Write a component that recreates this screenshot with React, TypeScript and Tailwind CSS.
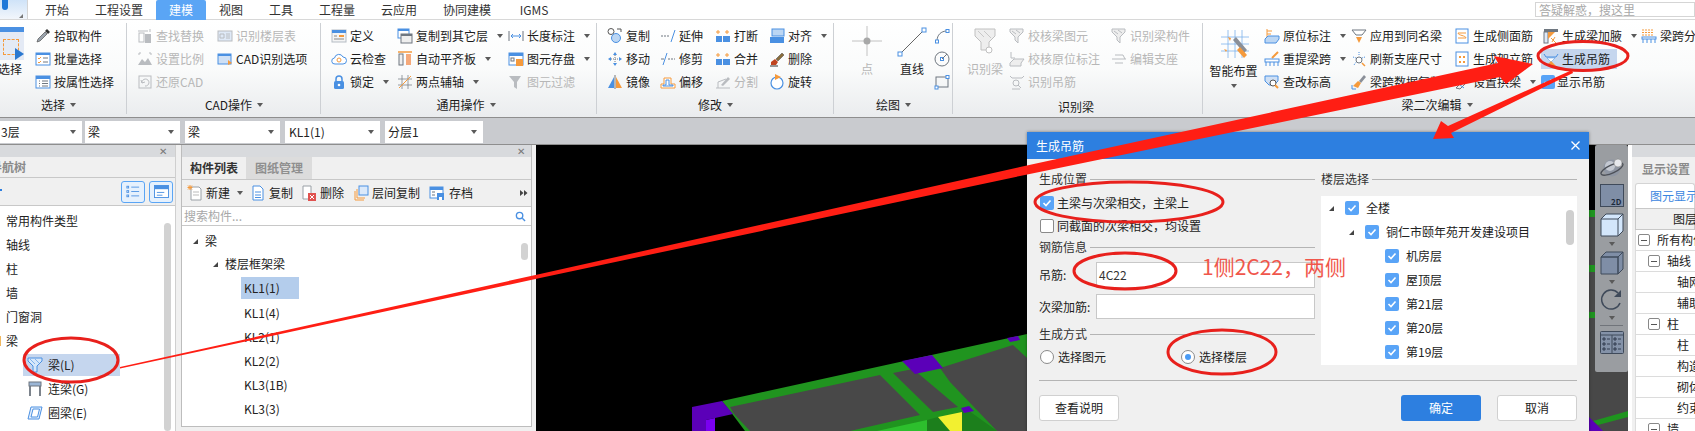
import type { ReactNode } from "react";

const B = "#4a90e2", O = "#f59a3c", G = "#b9bcc0", D = "#6f7780", L = "#dfe9f7";

const icons: Record<string, ReactNode> = {
  pick: <><path d="M2 14l1-3 7-7 2 2-7 7z" fill="#9aa3ad" stroke="#555" strokeWidth=".7" /><path d="M10 3l2-2 3 3-2 2z" fill="#333" /></>,
  batch: <><rect x="1" y="2" width="14" height="12" fill="#fff" stroke={B} /><rect x="1" y="2" width="14" height="2" fill={B} /><path d="M3 7l1 1 2-2M3 11l1 1 2-2" stroke={O} fill="none" /><path d="M8 7h5M8 11h5" stroke={D} /></>,
  attr: <><rect x="1" y="2" width="14" height="12" fill="#fff" stroke={B} /><rect x="1" y="2" width="14" height="3" fill={B} /><path d="M4 7h1M7 7h6M4 9.500h1M7 9.500h6M4 12h1M7 12h6" stroke={D} /></>,
  find: <><path d="M1 3h10M13 1v3" stroke={G} /><rect x="2" y="5" width="5" height="9" fill="none" stroke={G} /><rect x="8" y="6" width="6" height="9" fill={G} /></>,
  scale: <><path d="M2 2h2M12 2h2M2 4v-2M14 4v-2" stroke={G} /><path d="M1 14l4-6 3 3 3-4 4 7z" fill={G} /></>,
  restore: <><rect x="2" y="2" width="12" height="12" fill="none" stroke={G} /><path d="M5 9a3.500 3.500 0 1 1 3 3M5 9l-1-3M5 9l3-1" stroke={G} fill="none" /></>,
  floor: <><rect x="1" y="3" width="14" height="10" fill={L} stroke={G} /><path d="M3 6h4v4H3zM9 6h4M9 8h4M9 10h4" stroke={G} fill="none" /></>,
  cadopt: <><rect x="1" y="3" width="13" height="10" fill="#cfe0f5" stroke={B} /><rect x="1" y="3" width="13" height="2" fill={B} /><path d="M11 9l4 3-4 2z" fill={O} /></>,
  define: <><rect x="1" y="2" width="14" height="12" fill="#f4f4f4" stroke="#b5bcc4" /><rect x="1" y="2" width="14" height="3" fill={B} /><rect x="8" y="7" width="5" height="2" fill={O} /><path d="M3 8h3M3 11h10" stroke="#888" /></>,
  cloud: <><path d="M4 13a3 3 0 0 1-.500-6 4.500 4.500 0 0 1 8.500-1 3.500 3.500 0 0 1 0 7z" fill="#fff" stroke={B} /><circle cx="8" cy="9" r="2" fill="none" stroke={O} /></>,
  lock: <><path d="M5 7V5a3 3 0 0 1 6 0v2" fill="none" stroke={B} strokeWidth="1.500" /><rect x="3" y="7" width="10" height="8" rx="1.500" fill={B} /><circle cx="8" cy="11" r="1.300" fill="#fff" /></>,
  copyl: <><rect x="1" y="1" width="11" height="9" fill="#fff" stroke={B} /><rect x="1" y="1" width="11" height="2" fill={B} /><rect x="4" y="6" width="11" height="9" fill="#eee" stroke={D} /><rect x="4" y="6" width="11" height="2" fill={D} /></>,
  plate: <><path d="M1 1h14" stroke={O} strokeWidth="1.500" /><rect x="2" y="3" width="4" height="11" fill="#eee" stroke={D} /><rect x="9" y="3" width="5" height="11" fill="#f5a97a" /></>,
  twopt: <><path d="M1 5h14M1 11h14M5 1v14M11 1v14" stroke={D} strokeWidth=".7" /><path d="M2 14L14 2" stroke={O} /></>,
  len: <><path d="M1 3v10M15 3v10" stroke={D} /><path d="M3 8h10M3 8l2-2M3 8l2 2M13 8l-2-2M13 8l-2 2" stroke={B} fill="none" /></>,
  store: <><rect x="1" y="2" width="14" height="12" fill="#fff" stroke={B} /><rect x="1" y="2" width="14" height="3" fill={B} /><rect x="8" y="8" width="7" height="7" fill={O} /><rect x="3" y="7" width="3" height="3" fill="none" stroke={D} /></>,
  filter: <path d="M1 2h12L9 8v7L6 13V8z" fill={G} />,
  copy: <><circle cx="4" cy="3.500" r="3" fill="none" stroke="#555" /><circle cx="9" cy="10" r="4.500" fill="#bcd6f3" stroke={B} /><path d="M10 1h4v3" stroke="#555" fill="none" /></>,
  move: <><path d="M8 1l2 3H6zM8 15l2-3H6zM1 8l3-2v4zM15 8l-3-2v4z" fill={B} /><path d="M8 4v8M4 8h8" stroke={D} strokeDasharray="1 1" /></>,
  mirror: <><path d="M7 3v11H1z" fill={B} /><path d="M9 3v11h6z" fill={O} /><path d="M8 1v14" stroke="#777" /></>,
  extend: <><path d="M1 8h8" stroke={D} strokeDasharray="2 1" /><path d="M11 14l4-12" stroke={B} /></>,
  trim: <><path d="M8 8h7" stroke={D} strokeDasharray="2 1" /><path d="M1 8h3" stroke={D} /><path d="M3 14l4-12" stroke={B} /></>,
  offset: <><path d="M1 14v-4h3V4h7v6h4v4z" fill="#fff" stroke={O} /><path d="M3 12v-1h3V6h3v5h4v1z" fill="none" stroke={B} /></>,
  brk: <><path d="M3 2v4M1 4h4M12 2v4M10 4h4" stroke={O} /><rect x="1" y="8" width="6" height="6" fill={B} /><rect x="8" y="8" width="7" height="6" fill={B} /></>,
  split: <><path d="M1 14h14M3 14V8l8-3" stroke={G} fill="none" /><path d="M6 11l7-8 2 2-7 7z" fill={G} /></>,
  alignb: <><rect x="3" y="1" width="12" height="7" fill="#bcd6f3" stroke={B} /><rect x="1" y="9" width="14" height="6" fill={B} /></>,
  del: <><path d="M7 8l6-6 2 2-6 6z" fill="#8a6d3b" stroke="#444" strokeWidth=".5" /><path d="M2 11l4-3 3 3-2 3H2z" fill="#c0441f" /><path d="M1 15h8" stroke="#333" /></>,
  rotate: <><circle cx="8" cy="9" r="6" fill="#fff" stroke={B} strokeWidth="1.200" /><path d="M6 0l6 3-6 3z" fill={O} /></>,
  arc: <><path d="M3 13C3 7 7 3 13 3" fill="none" stroke={D} /><rect x="1.500" y="12" width="3" height="3" fill="#fff" stroke={B} /><rect x="12" y="1.500" width="3" height="3" fill="#fff" stroke={B} /></>,
  circle: <><circle cx="8" cy="8" r="7" fill="none" stroke={D} /><rect x="6.500" y="6.500" width="3" height="3" fill="#fff" stroke={B} /><path d="M8 8l5-5" stroke={D} /></>,
  rectd: <><rect x="2" y="3" width="12" height="10" fill="none" stroke={D} /><rect x="12" y="1.500" width="3" height="3" fill="#fff" stroke={B} /><rect x="1" y="12" width="3" height="3" fill="#fff" stroke={B} /></>,
  chk1: <><path d="M1 1h13v3L9 9v6l-3-3V9L1 4z" fill="#eee" stroke={G} /><path d="M3 3l4 3M7 2l4 3" stroke={G} /></>,
  chk2: <><path d="M2 1v6h4" stroke={G} fill="none" /><path d="M1 12l4-4h10l-3 4v3H1z" fill="#eee" stroke={G} /></>,
  hang: <><path d="M1 2l2 2h10l2-2" fill="none" stroke={G} /><circle cx="7" cy="9" r="3" fill="none" stroke={G} /><path d="M9 11l3 3M3 15h8" stroke={G} /></>,
  sup: <><path d="M1 8h14M4 4h8l2 4M4 12h8" stroke={G} fill="none" /></>,
  origin: <><path d="M3 9V1M3 3h5M3 6h4" stroke={O} /><path d="M1 11l3-3h11v3l-3 4H1z" fill="#bcd6f3" stroke={B} /></>,
  relift: <><path d="M8 7l6-6" stroke={O} strokeWidth="2" /><rect x="1" y="8" width="14" height="3" fill="#fff" stroke={B} /><path d="M2 11v4M14 11v4M6 11v4M10 11v4" stroke={B} /></>,
  elev: <><path d="M1 2h13v5l-4 4H5L1 7z" fill="#cfe0f5" stroke={B} /><circle cx="9" cy="9" r="3" fill="#fff" stroke="#555" /><path d="M11 11l3 3" stroke={O} strokeWidth="2" /></>,
  apply: <><path d="M1 2h14l-4 5H5z" fill="#fff" stroke={D} /><path d="M5 9h6l-3 6z" fill={O} /></>,
  refresh: <><path d="M8 1v3M2 6l3 1M14 6l-3 1M3 14l2-3" stroke={B} strokeDasharray="1 1" /><circle cx="8" cy="9" r="3" fill="#fff" stroke={D} /><path d="M11 12l3 3" stroke={O} strokeWidth="1.500" /></>,
  brush: <><path d="M8 7l5-6 2 2-5 6z" fill="#8a8f98" /><path d="M2 12l5-5 3 2-3 5z" fill={O} /><path d="M1 11v4h4" stroke={B} fill="none" /></>,
  side: <><rect x="2" y="1" width="12" height="14" fill="#fff" stroke={B} /><path d="M4 5h8M4 10h8" stroke={O} /><path d="M4 5c0 2.500 8 2.500 8 5" stroke={O} fill="none" /></>,
  stand: <><rect x="2" y="1" width="12" height="14" fill="#fff" stroke={B} /><rect x="5" y="5" width="2" height="2" fill={O} /><rect x="9" y="5" width="2" height="2" fill={O} /><rect x="5" y="10" width="2" height="2" fill={O} /><rect x="9" y="10" width="2" height="2" fill={O} /></>,
  arch: <><path d="M2 14l9-9 3 2-8 8z" fill="#eee" stroke={D} /><path d="M1 7l9 7" stroke={B} /><path d="M11 5l3-3" stroke={O} strokeWidth="2" /></>,
  haunch: <><rect x="1" y="1" width="14" height="3" fill={D} /><rect x="1" y="4" width="4" height="11" fill="#dfe9f7" stroke={D} /><path d="M5 4h7L5 11z" fill={O} /><path d="M8 10l5 5M12 9l-3 5" stroke={O} /></>,
  hanging: <><path d="M1 3l2 3h10l2-3" fill="none" stroke={B} /><path d="M4 7h8L8 11z" fill="#fff" stroke={B} strokeWidth=".5" /><path d="M3 15l5-5 5 5z" fill={O} /></>,
  span: <><path d="M1 2h11M1 4.500h11M1 7h11" stroke={O} strokeDasharray="2 1" /><rect x="1" y="9" width="14" height="2" fill="#fff" stroke={B} /><path d="M2 11v4M14 11v4M6 11v4M10 11v4" stroke={B} /></>,
  beam: <><path d="M1 1h14v3l-5 5v6H6V9L1 4z" fill="#d6e7fa" stroke={B} /><path d="M3 2l5 5M8 2l4 4" stroke={B} strokeWidth=".6" /></>,
  lian: <><rect x="2" y="1" width="12" height="4" fill="#9bb6d6" stroke={D} /><path d="M3 5v10M13 5v10" stroke={D} strokeWidth="1.800" /></>,
  ring: <path d="M4 2h11l-3 12H1zM6 4h6.500l-2 8H4z" fill="#e9f2fd" stroke={B} fillRule="evenodd" />,
  newdoc: <><path d="M4 2h8l2 2v11H4z" fill="#fff" stroke="#9aa0a6" /><path d="M6 7h6M6 10h6" stroke="#bbb" /><path d="M3 0v5M0.500 2.500h5M1 .500l4 4M5 .500l-4 4" stroke={O} /></>,
  docb: <><path d="M3 1h7l3 3v11H3z" fill="#fff" stroke={B} /><path d="M5 7h6M5 10h6M5 12.500h6" stroke={B} /></>,
  docx: <><path d="M2 1h8v13H2z" fill="#fff" stroke="#9aa0a6" /><rect x="7" y="8" width="8" height="8" fill="#e0524f" /><path d="M9 10l4 4M13 10l-4 4" stroke="#fff" /></>,
  lcopy: <><path d="M2 6v9h9" fill="none" stroke={O} /><path d="M4 4v9h8" fill="none" stroke={O} /><rect x="6" y="1" width="9" height="9" fill="#dbe9fa" stroke={B} /></>,
  save: <><rect x="1" y="2" width="13" height="11" fill="#fff" stroke={B} /><rect x="1" y="2" width="13" height="3" fill={B} /><path d="M3 7h3M3 10h3" stroke={D} /><rect x="8" y="8" width="7" height="7" fill={B} /><rect x="10" y="12" width="3" height="3" fill="#fff" /></>,
};

const Ic = ({ n, className = "w-4 h-4" }: { n: string; className?: string }) => (
  <svg viewBox="0 0 16 16" strokeWidth="1" className={`${className} shrink-0`}>{icons[n]}</svg>
);

const Caret = ({ className = "" }: { className?: string }) => (
  <span className={`inline-block w-0 h-0 border-x-[3.500px] border-t-[4px] border-x-transparent border-t-[#5a5a5a] ${className}`} />
);

const Item = ({ i, t, dis, caret, cw = "ml-[6px]" }: { i: string; t: string; dis?: boolean; caret?: boolean; cw?: string }) => (
  <div className={`h-[23px] flex items-center gap-[3px] whitespace-nowrap ${dis ? "text-[#b7b7b7]" : "text-[#1c1c1c]"}`}>
    <Ic n={i} />
    <span>{t}</span>
    {caret && <Caret className={cw} />}
  </div>
);

const Group = ({ label, w, children, caret = true, labelClass = "", divider = true }: { label: string; w: string; children: ReactNode; caret?: boolean; labelClass?: string; divider?: boolean }) => (
  <div className={`${w} shrink-0 h-full flex flex-col relative`}>
    <div className="h-[75px] pt-[4px] flex overflow-hidden">{children}</div>
    <div className={`h-[20px] flex items-center gap-[5px] justify-center text-[#1c1c1c] ${labelClass}`}>
      <span>{label}</span>
      {caret && <Caret />}
    </div>
    {divider && <span className="absolute right-0 top-[3px] bottom-[3px] w-px bg-[#cdd0d4]" />}
  </div>
);

const Check = ({ on = true }: { on?: boolean }) =>
  on ? (
    <span className="w-[14px] h-[14px] rounded-[2px] bg-[#59a4f7] flex items-center justify-center shrink-0">
      <svg viewBox="0 0 14 14" className="w-[14px] h-[14px]"><path d="M3.500 7l2.500 2.500L10.500 4.500" fill="none" stroke="#fff" strokeWidth="1.600" /></svg>
    </span>
  ) : (
    <span className="w-[14px] h-[14px] rounded-[2px] bg-white border border-[#8a8a8a] shrink-0" />
  );

const Tri = ({ className = "" }: { className?: string }) => (
  <svg viewBox="0 0 7 7" className={`w-[7px] h-[7px] shrink-0 ${className}`}><path d="M6 1v5H1z" fill="#444" /></svg>
);

const Section = ({ t, className = "" }: { t: string; className?: string }) => (
  <div className={`h-[18px] flex items-center gap-[3px] text-[#333] ${className}`}>
    <span className="whitespace-nowrap">{t}</span>
    <span className="flex-1 h-px bg-[#b4b4b4]" />
  </div>
);

const Btn = ({ t, primary }: { t: string; primary?: boolean }) => (
  <div className={`w-[80px] h-[26px] rounded-[3px] flex items-center justify-center ${primary ? "bg-[#2d7fe0] text-white" : "bg-white border border-[#d0d0d0] text-[#222]"}`}>{t}</div>
);

const tabs: [string, string][] = [
  ["开始", "w-[58px]"], ["工程设置", "w-[70px] pr-[4px]"], ["建模", "w-[50px]"], ["视图", "w-[50px]"], ["工具", "w-[50px]"],
  ["工程量", "w-[62px]"], ["云应用", "w-[62px]"], ["协同建模", "w-[74px]"], ["IGMS", "w-[60px]"],
];

const combos: [string, string, string][] = [
  ["3层", "w-[82px] pl-[1px]", "mr-[3px]"], ["梁", "w-[95px] pl-[3px]", "mr-[5px]"], ["梁", "w-[95px] pl-[3px]", "mr-[5px]"],
  ["KL1(1)", "w-[95px] pl-[4px]", "mr-[5px]"], ["分层1", "w-[98px] pl-[3px]", ""],
];

const rightRows: [string, string, boolean][] = [
  ["所有构件", "pl-[2px]", true], ["轴线", "pl-[12px]", true], ["轴网", "pl-[41px]", false], ["辅助", "pl-[41px]", false],
  ["柱", "pl-[12px]", true], ["柱", "pl-[41px]", false], ["构造", "pl-[41px]", false], ["砌体", "pl-[41px]", false],
  ["约束", "pl-[41px]", false], ["墙", "pl-[12px]", true],
];

export default function App() {
  return (
    <div className="w-[1695px] h-[431px] relative overflow-hidden bg-[#c9cbcf] text-[12px] leading-none text-[#222] font-['Noto_Sans_CJK_SC','Noto_Sans',sans-serif]">
      {/* Title tabs */}
      <div className="h-[20px] bg-white flex border-b border-[#d8d8d8]">
        <div className="w-[28px] h-[19px] relative bg-gradient-to-b from-[#cfe3f8] to-[#f2f6fb] border-r border-[#d4d4d4] overflow-hidden">
          <span className="absolute left-[2px] top-[-4px] w-[6px] h-[14px] rounded-b-full bg-[#1f78d8]" />
          <svg viewBox="0 0 4 4" className="absolute right-[4px] bottom-[1px] w-[4px] h-[4px]"><path d="M4 0v4H0z" fill="#777" /></svg>
        </div>
        {tabs.map(([t, w]) => (
          <div key={t} className={`${w} h-[20px] flex items-center justify-center ${t === "建模" ? "bg-[#5aa5f5] text-white rounded-t-[2px]" : "text-[#333]"}`}>{t}</div>
        ))}
        <div className="flex-1 flex justify-end items-start pt-[2px]">
          <div className="w-[160px] h-[15px] bg-white border border-[#d5d5d5] pl-[3px] flex items-center text-[#a8a8a8]">答疑解惑，搜这里</div>
        </div>
      </div>

      {/* Ribbon */}
      <div className="h-[98px] flex bg-gradient-to-b from-white via-[#fafbfb] to-[#eaecee] border-b border-[#8e8e8e]">
        <Group label="选择" w="w-[127px]" labelClass="pr-[10px]">
          <div className="w-[35px] flex flex-col">
            <div className="h-[33px] w-[24px] mt-[3px] relative bg-[#e4eaf5] border-t-[5px] border-t-[#4a90e2]">
              <span className="absolute left-[3px] top-[7px] right-[5px] bottom-[5px] border border-dashed border-[#f59a3c]" />
              <span className="absolute right-0 bottom-0 border-l-[9px] border-y-[6px] border-l-[#2a78d0] border-y-transparent" />
            </div>
            <div className="mt-[3px] -ml-[2px] text-[#1c1c1c]">选择</div>
          </div>
          <div>
            <Item i="pick" t="拾取构件" />
            <Item i="batch" t="批量选择" />
            <Item i="attr" t="按属性选择" />
          </div>
        </Group>
        <Group label="CAD操作" w="w-[194px]" labelClass="pl-[20px]">
          <div className="w-[80px] ml-[10px]">
            <Item i="find" t="查找替换" dis />
            <Item i="scale" t="设置比例" dis />
            <Item i="restore" t="还原CAD" dis />
          </div>
          <div>
            <Item i="floor" t="识别楼层表" dis />
            <Item i="cadopt" t="CAD识别选项" />
          </div>
        </Group>
        <Group label="通用操作" w="w-[276px]" labelClass="pl-[14px]">
          <div className="w-[66px] ml-[10px]">
            <Item i="define" t="定义" />
            <Item i="cloud" t="云检查" />
            <Item i="lock" t="锁定" caret />
          </div>
          <div className="w-[111px]">
            <Item i="copyl" t="复制到其它层" caret />
            <Item i="plate" t="自动平齐板" caret />
            <Item i="twopt" t="两点辅轴" caret />
          </div>
          <div>
            <Item i="len" t="长度标注" caret />
            <Item i="store" t="图元存盘" caret />
            <Item i="filter" t="图元过滤" dis />
          </div>
        </Group>
        <Group label="修改" w="w-[237px]">
          <div className="w-[53px] ml-[10px]">
            <Item i="copy" t="复制" /><Item i="move" t="移动" /><Item i="mirror" t="镜像" />
          </div>
          <div className="w-[55px]">
            <Item i="extend" t="延伸" /><Item i="trim" t="修剪" /><Item i="offset" t="偏移" />
          </div>
          <div className="w-[54px]">
            <Item i="brk" t="打断" /><Item i="brk" t="合并" /><Item i="split" t="分割" dis />
          </div>
          <div>
            <Item i="alignb" t="对齐" caret /><Item i="del" t="删除" /><Item i="rotate" t="旋转" />
          </div>
        </Group>
        <Group label="绘图" w="w-[119px]">
          <div className="w-[46px] ml-[10px] flex flex-col items-center">
            <svg viewBox="0 0 30 30" className="w-[30px] h-[30px] mt-[2px]"><path d="M15 0v30M0 15h30" stroke="#c2c2c2" /><circle cx="15" cy="15" r="3.500" fill="#a8a8a8" /></svg>
            <span className="mt-[7px] text-[#b7b7b7]">点</span>
          </div>
          <div className="w-[44px] flex flex-col items-center">
            <svg viewBox="0 0 30 30" className="w-[30px] h-[30px] mt-[3px]"><path d="M3 27L27 3" stroke="#666" /><rect x="1" y="25" width="4" height="4" fill="#fff" stroke="#4a90e2" /><rect x="25" y="1" width="4" height="4" fill="#fff" stroke="#4a90e2" /></svg>
            <span className="mt-[6px] text-[#1c1c1c]">直线</span>
          </div>
          <div>
            <div className="h-[23px] flex items-center"><Ic n="arc" /></div>
            <div className="h-[23px] flex items-center"><Ic n="circle" /></div>
            <div className="h-[23px] flex items-center"><Ic n="rectd" /></div>
          </div>
        </Group>
        <Group label="识别梁" w="w-[250px]" caret={false} labelClass="pr-[4px] pt-[3px]">
          <div className="w-[56px] pl-[8px] flex flex-col items-center">
            <svg viewBox="0 0 22 28" className="w-[22px] h-[28px] mt-[4px]"><path d="M1 1h20v7l-6 6v8H7v-8L1 8z" fill="#eee" stroke="#c0c0c0" /><path d="M4 3l6 6M10 3l7 7" stroke="#c8c8c8" /><circle cx="15" cy="22" r="3" fill="#fff" stroke="#c0c0c0" /></svg>
            <span className="mt-[7px] text-[#b7b7b7] whitespace-nowrap">识别梁</span>
          </div>
          <div className="w-[102px]">
            <Item i="chk1" t="校核梁图元" dis />
            <Item i="chk2" t="校核原位标注" dis />
            <Item i="hang" t="识别吊筋" dis />
          </div>
          <div>
            <Item i="chk1" t="识别梁构件" dis />
            <Item i="sup" t="编辑支座" dis />
          </div>
        </Group>
        <Group label="梁二次编辑" w="flex-1" labelClass="pr-[25px]" divider={false}>
          <div className="w-[61px] flex flex-col items-center">
            <svg viewBox="0 0 30 30" className="w-[30px] h-[30px] mt-[5px] ml-[2px]"><path d="M1 8h28M1 15h28M1 22h28M8 1v28M15 1v28M22 1v28" stroke="#7fb2ec" strokeWidth=".8" /><path d="M13 11l11 13 3-3L16 8z" fill="#8a8f98" /><path d="M8 8l3 1-1 3zM4 20l3 1-1 2z" fill="#f59a3c" /><path d="M20 18l7 8-3 3-7-8z" fill="#f59a3c" /></svg>
            <span className="mt-[6px] text-[#1c1c1c] whitespace-nowrap">智能布置</span>
            <Caret className="mt-[7px]" />
          </div>
          <div className="w-[87px]">
            <Item i="origin" t="原位标注" caret />
            <Item i="relift" t="重提梁跨" caret />
            <Item i="elev" t="查改标高" />
          </div>
          <div className="w-[103px]">
            <Item i="apply" t="应用到同名梁" />
            <Item i="refresh" t="刷新支座尺寸" />
            <Item i="brush" t="梁跨数据复制" />
          </div>
          <div className="w-[90px]">
            <Item i="side" t="生成侧面筋" />
            <Item i="stand" t="生成架立筋" />
            <Item i="arch" t="设置拱梁" caret />
          </div>
          <div className="w-[98px] -ml-[1px]">
            <Item i="haunch" t="生成梁加腋" caret />
            <div className="h-[23px] flex items-center">
              <div className="h-[20px] w-[76px] -ml-[2px] pl-[2px] bg-[#c5d6ee] flex items-center gap-[3px]"><Ic n="hanging" /><span>生成吊筋</span></div>
            </div>
            <div className="h-[23px] flex items-center gap-[2px] -ml-[2px]"><Check /><span>显示吊筋</span></div>
          </div>
          <div className="whitespace-nowrap">
            <Item i="span" t="梁跨分" />
          </div>
        </Group>
      </div>

      {/* Combo band */}
      <div className="h-[27px] pt-[3px] flex border-b border-[#8e8e8e]">
        {combos.map(([t, w, m], idx) => (
          <div key={idx} className={`${w} ${m} h-[22px] bg-white flex items-center justify-between pr-[6px] text-[#222]`}>
            <span>{t}</span>
            <Caret />
          </div>
        ))}
      </div>

      {/* Main */}
      <div className="h-[286px] flex bg-[#f0f0f0]">
        {/* Nav tree */}
        <div className="w-[176px] shrink-0 flex flex-col bg-white border-r border-[#cfcfcf]">
          <div className="h-[12px] bg-[#d8dadd] flex items-center justify-end pr-[8px] text-[#777] text-[10px]">✕</div>
          <div className="h-[21px] bg-[#f0f0f0] border-b border-[#c8c8c8] flex items-center font-bold text-[#8a8a8a] overflow-hidden">
            <span className="-ml-[10px]">导航树</span>
          </div>
          <div className="h-[28px] bg-[#f0f0f0] border-b border-[#c8c8c8] flex items-center justify-end gap-[4px] pr-[2px] relative">
            <span className="absolute left-0 top-[11px] w-[2px] h-[2px] bg-[#2d7fe0]" />
            <span className="w-[24px] h-[22px] rounded-[3px] border border-[#5aa5f5] bg-[#e6f1fd] flex items-center justify-center">
              <svg viewBox="0 0 16 14" className="w-[14px] h-[13px]"><path d="M6 2h9M6 7h9M6 12h9" stroke="#4a90e2" /><rect x="1" y="1" width="2" height="2" fill="none" stroke="#4a90e2" /><rect x="1" y="6" width="2" height="2" fill="none" stroke="#4a90e2" /><rect x="1" y="11" width="2" height="2" fill="none" stroke="#4a90e2" /></svg>
            </span>
            <span className="w-[24px] h-[22px] rounded-[3px] border border-[#5aa5f5] bg-[#e6f1fd] flex items-center justify-center">
              <svg viewBox="0 0 16 14" className="w-[15px] h-[13px]"><rect x=".5" y=".5" width="15" height="13" fill="#fff" stroke="#4a90e2" /><rect x=".5" y=".5" width="15" height="4" fill="#4a90e2" /><path d="M3 8h8M3 11h6" stroke="#4a90e2" /></svg>
            </span>
          </div>
          <div className="flex-1 relative pt-[3px]">
            <span className="absolute right-[4px] top-[17px] bottom-0 w-[7px] bg-[#d2d2d2] rounded-full" />
            {["常用构件类型", "轴线", "柱", "墙", "门窗洞", "梁"].map((t) => (
              <div key={t} className="h-[24px] pl-[6px] flex items-center relative">
                {t === "梁" && <span className="absolute left-0 top-[7px] w-[1px] h-[10px] bg-[#f0b860]" />}
                {t}
              </div>
            ))}
            <div className="h-[22px] my-[1px] ml-[23px] w-[97px] bg-[#c5d6ee] flex items-center pl-[4px] gap-[5px]"><Ic n="beam" />梁(L)</div>
            <div className="h-[24px] ml-[23px] flex items-center pl-[4px] gap-[5px]"><Ic n="lian" />连梁(G)</div>
            <div className="h-[24px] ml-[23px] flex items-center pl-[4px] gap-[5px]"><Ic n="ring" />圈梁(E)</div>
          </div>
        </div>
        <div className="w-[5px] shrink-0" />
        {/* Component list */}
        <div className="w-[351px] shrink-0 h-[282px] flex flex-col bg-white border border-[#bdbdbd] border-t-0">
          <div className="h-[12px] bg-[#d8dadd] flex items-center justify-end pr-[6px] text-[#777] text-[10px]">✕</div>
          <div className="h-[23px] bg-[#f0f0f0] border-b border-[#c8c8c8] flex">
            <div className="w-[64px] flex items-center justify-center font-bold text-[#333]">构件列表</div>
            <div className="w-[66px] bg-[#dcdcdc] flex items-center justify-center font-bold text-[#8f8f8f]">图纸管理</div>
          </div>
          <div className="h-[27px] bg-[#f0f0f0] border-b border-[#c8c8c8] flex items-center pl-[5px] relative">
            <span className="flex items-center gap-[3px] w-[63px]"><Ic n="newdoc" />新建<Caret className="ml-[4px]" /></span>
            <span className="flex items-center gap-[3px] w-[51px]"><Ic n="docb" />复制</span>
            <span className="flex items-center gap-[3px] w-[52px]"><Ic n="docx" />删除</span>
            <span className="flex items-center gap-[3px] w-[76px]"><Ic n="lcopy" />层间复制</span>
            <span className="flex items-center gap-[4px]"><Ic n="save" />存档</span>
            <svg viewBox="0 0 8 6" className="absolute right-[3px] top-[10px] w-[8px] h-[6px]"><path d="M0 0l3.500 3L0 6zM4 0l3.500 3L4 6z" fill="#444" /></svg>
          </div>
          <div className="h-[19px] border-b border-[#c8c8c8] flex items-center justify-between pl-[2px] pr-[5px] text-[#a8a8a8]">
            <span>搜索构件...</span>
            <svg viewBox="0 0 12 12" className="w-[11px] h-[11px]"><circle cx="5" cy="5" r="3.500" fill="none" stroke="#4a90e2" strokeWidth="1.500" /><path d="M8 8l3 3" stroke="#4a90e2" strokeWidth="1.500" /></svg>
          </div>
          <div className="flex-1 relative pt-[3px]">
            <span className="absolute right-[3px] top-[17px] h-[17px] w-[7px] bg-[#d2d2d2] rounded-full" />
            <div className="h-[24px] pl-[10px] flex items-center gap-[6px]"><Tri />梁</div>
            <div className="h-[22px] pl-[30px] flex items-center gap-[6px]"><Tri />楼层框架梁</div>
            <div className="h-[22px] my-[2px] ml-[59px] w-[58px] bg-[#b4cdec] flex items-center pl-[3px]">KL1(1)</div>
            {["KL1(4)", "KL2(1)", "KL2(2)", "KL3(1B)", "KL3(3)"].map((t) => (
              <div key={t} className="h-[24px] pl-[62px] flex items-center">{t}</div>
            ))}
          </div>
        </div>
        <div className="w-[4px] shrink-0" />

        {/* Viewport */}
        <div className="w-[1092px] shrink-0 h-[286px] relative bg-black overflow-hidden">
          <svg viewBox="536 145 1092 286" className="absolute left-0 top-0 w-[1092px] h-[286px]">
            <rect x="1589" y="217" width="39" height="214" fill="#484848" />
            <path d="M1589 210h39v7h-39zM1589 265h39v7h-39zM1589 312h39v6h-39zM1593 421l35-10v6l-30 8z" fill="#1f941f" />
            <path d="M1589 417l14 14h-14z" fill="#5b00b8" />
            <path d="M722 401L1027 334V431H745L733 415z" fill="#20941f" />
            <path d="M730 407L880 375 920 415 850 431H750L734 414z" fill="#484848" />
            <path d="M893 373L913 369 958 407 933 412z" fill="#484848" />
            <path d="M940 368L1013 345 1027 358V431H997L950 382z" fill="#484848" />
            <path d="M877 431L927 420V431z" fill="#2dbf2d" />
            <path d="M927 420L938 417 950 431H927zM962 412V431H997L965 408z" fill="#1c7f1c" />
            <path d="M938 417L962 412V431H950z" fill="#f2f030" />
            <path d="M692 407L722 401 733 414 706 420V431H692z" fill="#5b00b8" />
            <path d="M706 420L715 418V431H706z" fill="#7a00f0" />
            <path d="M902 361L932 355 943 368 915 374zM961 408L969 406 974 411 964 413zM1007 338L1018 336 1020 340 1010 342z" fill="#5b00b8" />
          </svg>
          {/* View toolbar */}
          <div className="absolute left-[1059px] top-0 w-[33px] h-[227px] bg-[#9a9da1] rounded-[2px] flex flex-col items-center pt-[13px]">
            <svg viewBox="0 0 24 20" className="w-[24px] h-[20px]"><circle cx="12" cy="10" r="8.500" fill="#8f96a3" /><circle cx="10" cy="8" r="5" fill="#c3c8d1" /><ellipse cx="12" cy="11" rx="12" ry="4" fill="none" stroke="#4c5058" strokeWidth="1.300" transform="rotate(-25 12 11)" /><circle cx="18" cy="5" r="4" fill="#e6e8ec" stroke="#777" strokeWidth=".5" /></svg>
            <div className="w-[24px] h-[23px] mt-[6px] bg-[#7f8ea6] border border-[#3f4a5a] flex items-end justify-end pr-[1px] text-[8px] text-[#1d2a3a] font-bold">2D</div>
            <svg viewBox="0 0 24 24" className="w-[24px] h-[24px] mt-[6px]"><path d="M1 6h17v17H1zM1 6l5-5h17v17l-5 5M18 6l5-5" fill="#d3e6fb" stroke="#3f4a5a" /></svg>
            <Caret className="mt-[5px]" />
            <svg viewBox="0 0 24 24" className="w-[24px] h-[24px] mt-[5px]"><path d="M1 6h17v17H1zM1 6l5-5h17v17l-5 5V6zM18 6l5-5" fill="#7f8ea6" stroke="#3f4a5a" /></svg>
            <Caret className="mt-[5px]" />
            <svg viewBox="0 0 24 22" className="w-[24px] h-[22px] mt-[5px]"><path d="M20 14A9.500 9.500 0 1 1 18 4" fill="none" stroke="#3f4a5a" strokeWidth="1.500" /><path d="M21 1v7h-7z" fill="#3f4a5a" /></svg>
            <Caret className="mt-[5px]" />
            <span className="w-[23px] h-px bg-[#70747a] mt-[5px]" />
            <svg viewBox="0 0 24 23" className="w-[24px] h-[23px] mt-[5px]"><rect x=".5" y=".5" width="23" height="22" rx="1" fill="#8492a8" stroke="#3f4a5a" /><path d="M1 4h22M12 4v18" stroke="#3f4a5a" /><path d="M3 7h2v2H3zM3 12h2v2H3zM3 17h2v2H3zM14 7h2v2h-2zM14 12h2v2h-2zM14 17h2v2h-2zM7 8h3M7 13h3M7 18h3M18 8h3M18 13h3M18 18h3" fill="none" stroke="#1f2a3a" strokeWidth=".8" /></svg>
          </div>
        </div>
        <div className="w-[4px] shrink-0 bg-white" />

        {/* Display settings */}
        <div className="flex-1 flex flex-col bg-[#f0f0f0] overflow-hidden">
          <div className="h-[12px] shrink-0 bg-[#d8dadd]" />
          <div className="h-[24px] shrink-0 flex items-center pl-[10px] font-bold text-[#8a8a8a] whitespace-nowrap">显示设置</div>
          <div className="h-[25px] mt-[2px] shrink-0 ml-[3px] pl-[14px] bg-white border border-[#d4d4d4] border-b-0 rounded-t-[3px] flex items-center text-[#3b86e0] whitespace-nowrap">图元显示</div>
          <div className="h-[22px] shrink-0 ml-[3px] bg-[#f0f0f0] border border-[#c8c8c8] pl-[37px] flex items-center whitespace-nowrap">图层</div>
          {rightRows.map(([t, p, box], i) => (
            <div key={i} className={`h-[21px] shrink-0 ml-[3px] bg-white border-l border-b border-[#dcdcdc] ${p} flex items-center gap-[7px] whitespace-nowrap`}>
              {box && (
                <span className="w-[12px] h-[12px] rounded-[2px] border border-[#888] bg-white flex items-center justify-center shrink-0">
                  <span className="w-[6px] h-px bg-[#555]" />
                </span>
              )}
              {t}
            </div>
          ))}
        </div>
      </div>

      {/* Dialog */}
      <div className="absolute left-[1027px] top-[132px] w-[562px] h-[320px] bg-[#f0f0f0] shadow-[0_0_3px_rgba(0,0,0,.4)] flex flex-col">
        <div className="h-[27px] bg-[#2d7fe0] text-white flex items-center justify-between pl-[9px] pr-[9px]">
          <span>生成吊筋</span>
          <svg viewBox="0 0 9 9" className="w-[9px] h-[9px]"><path d="M.5.500l8 8M8.500.500l-8 8" stroke="#fff" strokeWidth="1.300" /></svg>
        </div>
        <div className="px-[12px] pt-[11px]">
          <div className="flex h-[198px]">
            <div className="w-[276px] shrink-0">
              <Section t="生成位置" />
              <div className="mt-[3px] h-[23px] flex items-center gap-[3px] pl-[1px]"><Check />主梁与次梁相交，主梁上</div>
              <div className="h-[23px] flex items-center gap-[3px] pl-[1px]"><Check on={false} />同截面的次梁相交，均设置</div>
              <Section t="钢筋信息" className="mt-[1px]" />
              <div className="mt-[6px] h-[26px] flex items-center">
                <span className="w-[57px]">吊筋:</span>
                <div className="flex-1 h-full bg-white border border-[#c8c8c8] flex items-center pl-[2px] text-[#333]">4C22</div>
              </div>
              <div className="mt-[6px] h-[25px] flex items-center">
                <span className="w-[57px]">次梁加筋:</span>
                <div className="flex-1 h-full bg-white border border-[#c8c8c8]" />
              </div>
              <Section t="生成方式" className="mt-[6px]" />
              <div className="mt-[3px] h-[22px] flex items-center">
                <span className="w-[142px] flex items-center gap-[4px] pl-[1px]">
                  <span className="w-[14px] h-[14px] rounded-full bg-white border border-[#8a8a8a]" />选择图元
                </span>
                <span className="flex items-center gap-[4px]">
                  <span className="w-[14px] h-[14px] rounded-full bg-white border border-[#8a8a8a] flex items-center justify-center"><span className="w-[6px] h-[6px] rounded-full bg-[#4a9bf5]" /></span>选择楼层
                </span>
              </div>
            </div>
            <div className="w-[6px]" />
            <div className="flex-1 min-w-0">
              <Section t="楼层选择" />
              <div className="mt-[8px] h-[169px] bg-white relative overflow-hidden">
                <span className="absolute right-[3px] top-[14px] w-[8px] h-[35px] bg-[#cfcfcf] rounded-full" />
                <div className="h-[24px] flex items-center pl-[7px]"><Tri /><span className="w-[10px]" /><Check /><span className="ml-[7px]">全楼</span></div>
                <div className="h-[24px] flex items-center pl-[27px]"><Tri /><span className="w-[10px]" /><Check /><span className="ml-[7px]">铜仁市颐年苑开发建设项目</span></div>
                {["机房层", "屋顶层", "第21层", "第20层", "第19层"].map((t) => (
                  <div key={t} className="h-[24px] flex items-center pl-[64px]"><Check /><span className="ml-[7px]">{t}</span></div>
                ))}
              </div>
            </div>
          </div>
          <div className="h-px bg-[#b4b4b4] mt-[12px]" />
          <div className="mt-[14px] flex">
            <Btn t="查看说明" />
            <span className="flex-1" />
            <Btn t="确定" primary />
            <span className="w-[16px]" />
            <Btn t="取消" />
          </div>
        </div>
      </div>

      {/* Annotation text */}
      <div className="absolute left-[1202px] top-[254px] text-[21px] leading-[24px] text-[#f0564b] whitespace-nowrap">1侧2C22，两侧</div>

      {/* Hand-drawn annotations */}
      <svg viewBox="0 0 1695 431" className="absolute left-0 top-0 w-[1695px] h-[431px] pointer-events-none">
        <g fill="none" stroke="#e8201c" strokeWidth="3">
          <ellipse cx="71" cy="360" rx="47" ry="22" />
          <ellipse cx="1583" cy="56" rx="45" ry="14.500" />
          <ellipse cx="1129" cy="202" rx="94" ry="20" />
          <ellipse cx="1125" cy="271" rx="51" ry="18" />
          <ellipse cx="1222" cy="352" rx="54" ry="22" />
        </g>
        <path d="M120 367L540 274 1020 167 1498 63 1494 56 1533 64 1506 84 1500 77 1020 176 540 278 120 368.500z" fill="#ff1e14" />
        <path d="M1572 70L1448 126 1441 121 1433 139 1454 138 1451 133 1573 73z" fill="#ff1e14" />
      </svg>
    </div>
  );
}
